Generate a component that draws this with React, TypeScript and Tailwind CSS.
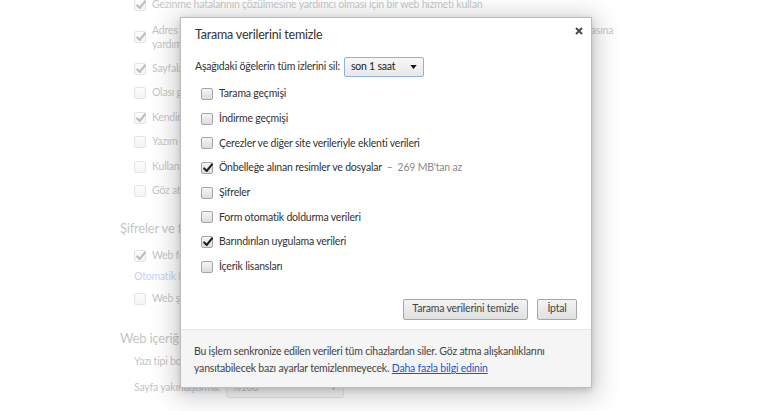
import type { ReactNode } from "react";

// checkbox look of the old chrome settings pages
function Box({ checked }: { checked?: boolean }) {
    return (
        <span className="relative inline-flex h-[12px] w-[12px] shrink-0 items-center justify-center rounded-[2px] border border-[#a6a6a6] bg-linear-to-b from-[#f6f6f6] to-[#dcdcdc]">
            {checked && (
                <svg viewBox="0 0 12 12" className="absolute left-[0px] top-[-1px] h-[12px] w-[12px]">
                    <path d="M2.2 6.4 L4.8 8.9 L10 2.4" stroke="#1e1e1e" strokeWidth="2.1" fill="none" strokeLinecap="round" strokeLinejoin="round" />
                </svg>
            )}
        </span>
    );
}

function BgRow({ checked, children, h = "h-[24.5px]" }: { checked?: boolean; children: ReactNode; h?: string }) {
    return (
        <div className={`flex items-center gap-[6px] ${h}`}>
            <Box checked={checked} />
            <span className="whitespace-nowrap">{children}</span>
        </div>
    );
}

function Item({ checked, label, note }: { checked?: boolean; label: string; note?: string }) {
    return (
        <div className="flex h-[24.7px] items-center gap-[6px]">
            <Box checked={checked} />
            <span className="whitespace-nowrap">
                {label}
                {note && <span className="text-[#8a8a8a]"> &nbsp;–&nbsp; {note}</span>}
            </span>
        </div>
    );
}

const items = [
    { label: "Tarama geçmişi" },
    { label: "İndirme geçmişi" },
    { label: "Çerezler ve diğer site verileriyle eklenti verileri" },
    { label: "Önbelleğe alınan resimler ve dosyalar", checked: true, note: "269 MB'tan az" },
    { label: "Şifreler" },
    { label: "Form otomatik doldurma verileri" },
    { label: "Barındırılan uygulama verileri", checked: true },
    { label: "İçerik lisansları" },
];

export default function App() {
    return (
        <div className="relative h-[411px] w-[770px] overflow-hidden bg-white font-['Lato',sans-serif] text-[10.5px] tracking-[-0.2px] text-[#303942]">
            {/* settings page behind the dialog */}
            <div className="pl-[120px]">
                <div className="-mt-[7.25px] pl-[14px]">
                    <BgRow checked>Gezinme hatalarının çözülmesine yardımcı olması için bir web hizmeti kullan</BgRow>
                    <div className="flex h-[39px] items-center gap-[6px]">
                        <Box checked />
                        <span className="whitespace-nowrap leading-[14px]">
                            Adres çubuğuna veya uygulama başlatıcı arama kutusuna yazılan aramaların ve URL'lerin tamamlanmasına
                            <br />
                            yardımcı olması için bir tahmin hizmeti kullan
                        </span>
                    </div>
                    <BgRow checked>Sayfaları daha hızlı yüklemek için ağ işlemlerini tahmin et</BgRow>
                    <BgRow>Olası güvenlik olaylarının ayrıntılarını otomatik olarak Google'a bildir</BgRow>
                    <BgRow checked>Kendinizi ve cihazınızı tehlikeli sitelerden koruyun</BgRow>
                    <BgRow>Yazım hatalarının düzeltilmesine yardımcı olması için bir web hizmeti kullan</BgRow>
                    <BgRow>Kullanım istatistiklerini ve kilitlenme raporlarını otomatik olarak Google'a gönder</BgRow>
                    <BgRow>Göz atma trafiğinizle birlikte bir "İzleme" isteği gönder</BgRow>
                </div>
                <div className="mt-[13px] flex h-[24px] items-center text-[13px]">Şifreler ve formlar</div>
                <div className="pl-[14px]">
                    <BgRow checked h="h-[24px] mt-[4px]">Web formlarını tek bir tıklamayla doldurmak için Otomatik Doldurma'yı etkinleştir</BgRow>
                    <div className="h-[16px] leading-[16px] text-[#3b5fcf]">Otomatik Doldurma ayarlarını yönet</div>
                    <BgRow h="h-[24px] mt-[3px]">Web şifrelerinizi kaydetmeyi önerin</BgRow>
                </div>
                <div className="mt-[15px] flex h-[24px] items-center text-[13px]">Web içeriği</div>
                <div className="pl-[14px]">
                    <div className="flex h-[24px] items-center">Yazı tipi boyutu:</div>
                    <div className="mt-[2px] flex h-[24px] items-center gap-[5px]">
                        <span>Sayfa yakınlaştırma:</span>
                        <span className="flex h-[20px] w-[118px] items-center justify-between rounded-[2px] border border-[#aaa] bg-linear-to-b from-[#f6f6f6] to-[#e4e4e4] px-[6px]">
                            %100
                            <svg viewBox="0 0 8 5" className="h-[4px] w-[7px]"><path d="M0 0 H8 L4 5 Z" fill="#333" /></svg>
                        </span>
                    </div>
                </div>
            </div>

            {/* dim layer */}
            <div className="absolute inset-0 bg-white/70" />

            {/* dialog */}
            <div className="absolute left-[180px] top-[17px] flex h-[371px] w-[412px] flex-col border border-[#bcbcbc] bg-white text-[#333] shadow-[0_4px_23px_5px_rgba(0,0,0,0.2),0_2px_6px_rgba(0,0,0,0.15)]">
                <button className="absolute right-[7px] top-[8px] flex h-[10px] w-[10px] items-center justify-center">
                    <svg viewBox="0 0 8 8" className="h-[8px] w-[8px]">
                        <path d="M1 1 L7 7 M7 1 L1 7" stroke="#4a4a4a" strokeWidth="2" />
                    </svg>
                </button>
                <div className="pl-[14px] pt-[8px] text-[12.5px] leading-[17px]">Tarama verilerini temizle</div>

                <div className="mt-[14px] flex h-[20px] items-center gap-[4px] pl-[14px]">
                    <span>Aşağıdaki öğelerin tüm izlerini sil:</span>
                    <span className="flex h-[20px] w-[80px] items-center justify-between rounded-[2px] border border-[#8fb0e4] bg-linear-to-b from-[#f7f7f7] to-[#e8e8e8] pl-[6px] pr-[6px] text-[#222]">
                        son 1 saat
                        <svg viewBox="0 0 8 5" className="h-[4px] w-[7px]"><path d="M0 0 H8 L4 5 Z" fill="#111" /></svg>
                    </span>
                </div>

                <div className="mt-[4.7px] pl-[20px]">
                    {items.map((it) => (
                        <Item key={it.label} {...it} />
                    ))}
                </div>

                <div className="mt-[19.5px] flex justify-end gap-[9px] pr-[14px]">
                    <button className="h-[21px] w-[125px] whitespace-nowrap rounded-[2px] border border-[#a6a6a6] bg-linear-to-b from-[#f4f4f4] to-[#e0e0e0] text-[#444]">
                        Tarama verilerini temizle
                    </button>
                    <button className="h-[21px] w-[40px] whitespace-nowrap rounded-[2px] border border-[#a6a6a6] bg-linear-to-b from-[#f4f4f4] to-[#e0e0e0] text-[#444]">
                        İptal
                    </button>
                </div>

                <div className="mt-auto h-[58px] whitespace-nowrap border-t border-[#e6e6e6] bg-[#f5f5f5] pl-[13px] pt-[13px] leading-[17px] text-[#444]">
                    Bu işlem senkronize edilen verileri tüm cihazlardan siler. Göz atma alışkanlıklarını
                    <br />
                    yansıtabilecek bazı ayarlar temizlenmeyecek.{" "}
                    <a href="#" className="text-[#1a55d0] underline">Daha fazla bilgi edinin</a>
                </div>
            </div>
        </div>
    );
}
